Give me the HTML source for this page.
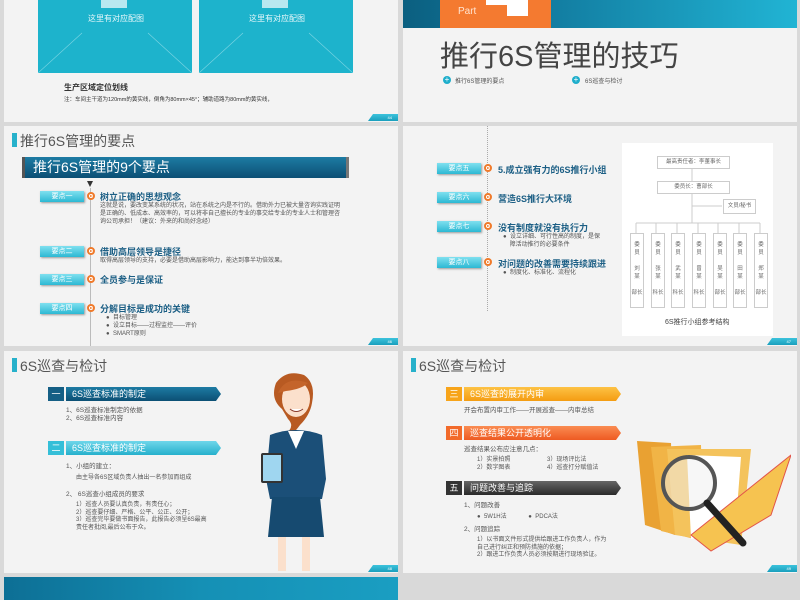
<!DOCTYPE html>
<html><head><meta charset="utf-8"><style>
*{margin:0;padding:0;box-sizing:border-box}
body{width:800px;height:600px;overflow:hidden;background:#d9d9d9;position:relative;font-family:"Liberation Sans","Noto Sans CJK SC",sans-serif;color:#444}
.a{position:absolute;white-space:nowrap}
.s{position:absolute;background:#f3f3f3;overflow:hidden}
.tab{position:absolute;width:30px;height:7px;background:linear-gradient(#3cc3dc,#1a9fbd);clip-path:polygon(5px 0,100% 0,100% 100%,0 100%);color:#fff;font-size:4px;text-align:right;padding-right:6px;line-height:7px}
.ttl{position:absolute;font-size:14px;color:#555}
.ttl:before{content:"";position:absolute;left:-8px;top:2px;width:5px;height:14px;background:#27b1cb}
.lab{position:absolute;width:44px;height:11px;background:linear-gradient(#7fe0ef,#2cb8d3);color:#fff;font-size:7px;line-height:11px;text-align:center;box-shadow:1px 1px 2px #999}
.oc{position:absolute;width:8px;height:8px;border-radius:50%;border:2px solid #f07a2a;background:#fff}
.oc:after{content:"";position:absolute;left:1.3px;top:0.5px;border-left:3px solid #f07a2a;border-top:1.7px solid transparent;border-bottom:1.7px solid transparent}
.h{position:absolute;font-size:9px;font-weight:bold;color:#1c5f85;white-space:nowrap}
.t{position:absolute;font-size:6px;color:#555;line-height:8px}
.bn{position:absolute;height:14px;color:#fff;font-size:9px;line-height:14px;padding-left:6px;clip-path:polygon(0 0,calc(100% - 5px) 0,100% 50%,calc(100% - 5px) 100%,0 100%)}
.nb{position:absolute;width:16px;height:14px;color:#fff;font-size:9px;line-height:14px;text-align:center}
.ob{position:absolute;border:1px solid #ccc;background:#fff;font-size:5.5px;color:#666;text-align:center}
</style></head><body>

<!-- top left slide -->
<div class="s" style="left:4px;top:0;width:394px;height:122px">
 <div class="a" style="left:34px;top:0;width:154px;height:73px;background:#1db3cc"></div>
 <div class="a" style="left:195px;top:0;width:154px;height:73px;background:#1db3cc"></div>
 <div class="a" style="left:97px;top:0;width:26px;height:8px;background:#b8e8f0"></div>
 <div class="a" style="left:258px;top:0;width:26px;height:8px;background:#b8e8f0"></div>
 <div class="a" style="left:84px;top:13px;font-size:8px;color:#e6f7fa">这里有对应配图</div>
 <div class="a" style="left:245px;top:13px;font-size:8px;color:#e6f7fa">这里有对应配图</div>
 <svg class="a" style="left:34px;top:0" width="315" height="73"><g stroke="#7fd6e4" stroke-width=".6"><line x1="0" y1="73" x2="44" y2="33"/><line x1="110" y1="33" x2="154" y2="73"/><line x1="161" y1="73" x2="205" y2="33"/><line x1="271" y1="33" x2="315" y2="73"/></g></svg>
 <div class="a" style="left:60px;top:82px;font-size:8px;font-weight:bold;color:#333">生产区域定位划线</div>
 <div class="a" style="left:60px;top:95px;font-size:5.5px;color:#333">注：车间主干道为120mm的黄实线，倒角为80mm×45°；辅助道路为80mm的黄实线，</div>
 <div class="tab" style="left:364px;top:114px">44</div>
</div>

<!-- top right slide -->
<div class="s" style="left:403px;top:0;width:394px;height:122px">
 <div class="a" style="left:0;top:0;width:394px;height:28px;background:linear-gradient(90deg,#0b5f80,#137fa3 40%,#21b4d4)"></div>
 <div class="a" style="left:37px;top:0;width:111px;height:28px;background:#f47a30"></div>
 <div class="a" style="left:55px;top:6px;font-size:10px;color:#ffe3cf">Part</div>
 <div class="a" style="left:83px;top:0;width:42px;height:5px;background:#fff"></div>
 <div class="a" style="left:104px;top:0;width:21px;height:16px;background:#fff"></div>
 <div class="a" style="left:37px;top:33px;font-size:29px;color:#444">推行6S管理的技巧</div>
 <div class="a" style="left:40px;top:76px;width:8px;height:8px;border-radius:50%;background:#1eaecb;color:#fff;font-size:8px;line-height:8px;text-align:center">+</div>
 <div class="a" style="left:52px;top:76px;font-size:6px;color:#555">推行6S管理的要点</div>
 <div class="a" style="left:169px;top:76px;width:8px;height:8px;border-radius:50%;background:#1eaecb;color:#fff;font-size:8px;line-height:8px;text-align:center">+</div>
 <div class="a" style="left:182px;top:76px;font-size:6px;color:#555">6S巡查与检讨</div>
</div>

<!-- row2 left -->
<div class="s" style="left:4px;top:126px;width:394px;height:220px">
 <div class="ttl" style="left:16px;top:5px">推行6S管理的要点</div>
 <div class="a" style="left:18px;top:31px;width:327px;height:21px;background:linear-gradient(#1d7ba3,#0c4f74);border-left:3px solid #555;border-right:3px solid #777;color:#fff;font-size:14px;line-height:21px;padding-left:8px">推行6S管理的9个要点</div>
 <div class="a" style="left:83px;top:55px;border-top:6px solid #333;border-left:3px solid transparent;border-right:3px solid transparent"></div>
 <div class="a" style="left:86px;top:62px;width:1px;height:158px;background:#bbb"></div>
 <div class="lab" style="left:36px;top:65px">要点一</div><div class="oc" style="left:83px;top:66px"></div>
 <div class="h" style="left:96px;top:64px">树立正确的思想观念</div>
 <div class="t" style="left:96px;top:76px;width:240px;white-space:normal">这就是说，要改变某系统的状况，站在系统之内是不行的。借助外力已被大量咨询实践证明是正确的、低成本、高效率的，可以将非自己擅长的专业的事交给专业的专业人士和管理咨询公司承担！（建议：外来的和尚好念经）</div>
 <div class="lab" style="left:36px;top:120px">要点二</div><div class="oc" style="left:83px;top:121px"></div>
 <div class="h" style="left:96px;top:119px">借助高层领导是捷径</div>
 <div class="t" style="left:96px;top:131px">取得高层领导的支持，必要是借助高层影响力，能达到事半功倍效果。</div>
 <div class="lab" style="left:36px;top:148px">要点三</div><div class="oc" style="left:83px;top:149px"></div>
 <div class="h" style="left:96px;top:147px">全员参与是保证</div>
 <div class="lab" style="left:36px;top:177px">要点四</div><div class="oc" style="left:83px;top:178px"></div>
 <div class="h" style="left:96px;top:176px">分解目标是成功的关键</div>
 <div class="t" style="left:102px;top:188px">●&nbsp; 目标管理<br>●&nbsp; 设立目标——过程监控——评价<br>●&nbsp; SMART原则</div>
 <div class="tab" style="left:364px;top:212px">46</div>
</div>

<!-- row2 right -->
<div class="s" style="left:403px;top:126px;width:394px;height:220px">
 <div class="a" style="left:84px;top:0;width:0;height:185px;border-left:1px dotted #aaa"></div>
 <div class="lab" style="left:34px;top:37px">要点五</div><div class="oc" style="left:81px;top:38px"></div>
 <div class="h" style="left:95px;top:37px">5.成立强有力的6S推行小组</div>
 <div class="lab" style="left:34px;top:66px">要点六</div><div class="oc" style="left:81px;top:67px"></div>
 <div class="h" style="left:95px;top:66px">营造6S推行大环境</div>
 <div class="lab" style="left:34px;top:95px">要点七</div><div class="oc" style="left:81px;top:96px"></div>
 <div class="h" style="left:95px;top:95px">没有制度就没有执行力</div>
 <div class="t" style="left:100px;top:107px">●&nbsp; 设立详细、可行性高的制度，是保<br>&nbsp;&nbsp;&nbsp;&nbsp;障活动推行的必要条件</div>
 <div class="lab" style="left:34px;top:131px">要点八</div><div class="oc" style="left:81px;top:132px"></div>
 <div class="h" style="left:95px;top:131px">对问题的改善需要持续跟进</div>
 <div class="t" style="left:100px;top:143px">●&nbsp; 制度化、标准化、流程化</div>
 <div class="a" style="left:219px;top:17px;width:151px;height:193px;background:#fff"></div>
 <svg class="a" style="left:219px;top:17px" width="151" height="193"><g stroke="#ccc" stroke-width="1" fill="none"><line x1="70" y1="25" x2="70" y2="80"/><line x1="70" y1="63" x2="100" y2="63"/><line x1="14" y1="80" x2="138" y2="80"/><line x1="14" y1="80" x2="14" y2="90"/><line x1="34" y1="80" x2="34" y2="90"/><line x1="55" y1="80" x2="55" y2="90"/><line x1="76" y1="80" x2="76" y2="90"/><line x1="96" y1="80" x2="96" y2="90"/><line x1="117" y1="80" x2="117" y2="90"/><line x1="138" y1="80" x2="138" y2="90"/></g></svg>
 <div class="ob" style="left:254px;top:30px;width:73px;height:13px;line-height:11px">最高责任者：李董事长</div>
 <div class="ob" style="left:254px;top:55px;width:73px;height:13px;line-height:11px">委员长：曹部长</div>
 <div class="ob" style="left:320px;top:73px;width:33px;height:15px;line-height:13px">文员/秘书</div>
 <div class="ob" style="left:227px;top:107px;width:14px;height:75px;line-height:8px;padding-top:7px">委<br>员<br><br>刘<br>某<br><br>部长</div>
 <div class="ob" style="left:248px;top:107px;width:14px;height:75px;line-height:8px;padding-top:7px">委<br>员<br><br>张<br>某<br><br>科长</div>
 <div class="ob" style="left:268px;top:107px;width:14px;height:75px;line-height:8px;padding-top:7px">委<br>员<br><br>武<br>某<br><br>科长</div>
 <div class="ob" style="left:289px;top:107px;width:14px;height:75px;line-height:8px;padding-top:7px">委<br>员<br><br>曾<br>某<br><br>科长</div>
 <div class="ob" style="left:310px;top:107px;width:14px;height:75px;line-height:8px;padding-top:7px">委<br>员<br><br>吴<br>某<br><br>部长</div>
 <div class="ob" style="left:330px;top:107px;width:14px;height:75px;line-height:8px;padding-top:7px">委<br>员<br><br>田<br>某<br><br>部长</div>
 <div class="ob" style="left:351px;top:107px;width:14px;height:75px;line-height:8px;padding-top:7px">委<br>员<br><br>郑<br>某<br><br>部长</div>
 <div class="a" style="left:262px;top:191px;font-size:7px;color:#444">6S推行小组参考结构</div>
 <div class="tab" style="left:364px;top:212px">47</div>
</div>

<!-- row3 left -->
<div class="s" style="left:4px;top:351px;width:394px;height:222px">
 <div class="ttl" style="left:16px;top:5px">6S巡查与检讨</div>
 <div class="nb" style="left:44px;top:36px;background:#155f85">一</div>
 <div class="bn" style="left:62px;top:36px;width:155px;background:linear-gradient(#1d7ba3,#0c4f74)">6S巡查标准的制定</div>
 <div class="t" style="left:62px;top:56px;font-size:6.5px">1、6S巡查标准制定的依据<br>2、6S巡查标准内容</div>
 <div class="nb" style="left:44px;top:90px;background:#35bfd8">二</div>
 <div class="bn" style="left:62px;top:90px;width:155px;background:linear-gradient(#6fd6ea,#26b0cc)">6S巡查标准的制定</div>
 <div class="t" style="left:62px;top:112px;font-size:6.5px">1、小组的建立：</div>
 <div class="t" style="left:72px;top:123px">由主导各6S区域负责人抽出一名参加而组成</div>
 <div class="t" style="left:62px;top:140px;font-size:6.5px">2、 6S巡查小组成员的要求</div>
 <div class="t" style="left:72px;top:151px;line-height:7.5px">1）巡查人员要认真负责，有责任心；<br>2）巡查要仔细、严格、公平、公正、公开；<br>3）巡查完毕要做书面报告，此报告必须呈6S最高<br>责任者批阅,最后公布于众。</div>
 <svg class="a" style="left:252px;top:18px" width="80" height="204">
  <path d="M26 40 Q14 30 20 14 Q30 0 48 6 Q60 14 56 34 Q54 46 44 56 Q34 70 28 66 Q40 58 32 50 Z" fill="#b85a22"/>
  <ellipse cx="40" cy="30" rx="14" ry="18" fill="#fbe0cc"/>
  <path d="M22 24 Q30 6 52 14 Q46 20 30 22 Z" fill="#c4642a"/>
  <path d="M34 40 Q40 45 47 40" stroke="#8a3b2b" fill="#fff" stroke-width="1"/>
  <path d="M14 66 Q40 56 66 66 L70 110 L66 130 L14 130 L10 110 Z" fill="#1b4f78"/>
  <path d="M32 62 L40 80 L48 62 Z" fill="#fff"/>
  <path d="M16 128 L64 128 L68 168 L12 168 Z" fill="#164a70"/>
  <rect x="5" y="84" width="22" height="30" rx="2" fill="#333"/>
  <rect x="7" y="86" width="18" height="26" fill="#9fd6f0"/>
  <rect x="22" y="168" width="8" height="34" fill="#fbe0cc"/>
  <rect x="46" y="168" width="8" height="34" fill="#fbe0cc"/>
 </svg>
 <div class="tab" style="left:364px;top:214px">48</div>
</div>

<!-- row3 right -->
<div class="s" style="left:403px;top:351px;width:394px;height:222px">
 <div class="ttl" style="left:16px;top:5px">6S巡查与检讨</div>
 <div class="nb" style="left:43px;top:36px;background:#f7a41a">三</div>
 <div class="bn" style="left:61px;top:36px;width:157px;background:linear-gradient(#fdc245,#f49c12)">6S巡查的展开内审</div>
 <div class="t" style="left:61px;top:56px;font-size:6.5px">开会布置内审工作——开展巡查——内审总结</div>
 <div class="nb" style="left:43px;top:75px;background:#f26a2a">四</div>
 <div class="bn" style="left:61px;top:75px;width:157px;background:linear-gradient(#fa8c52,#ee5a22)">巡查结果公开透明化</div>
 <div class="t" style="left:61px;top:95px;font-size:6.5px">巡查结果公布应注意几点：</div>
 <div class="t" style="left:74px;top:106px;line-height:7.5px">1）实景拍照<br>2）数字图表</div>
 <div class="t" style="left:144px;top:106px;line-height:7.5px">3）现场评比法<br>4）巡查打分赋值法</div>
 <div class="nb" style="left:43px;top:130px;background:#333">五</div>
 <div class="bn" style="left:61px;top:130px;width:157px;background:linear-gradient(#666,#2a2a2a)">问题改善与追踪</div>
 <div class="t" style="left:61px;top:151px;font-size:6.5px">1、问题改善</div>
 <div class="t" style="left:74px;top:162px">●&nbsp; 5W1H法&nbsp;&nbsp;&nbsp;&nbsp;&nbsp;&nbsp;&nbsp;&nbsp;&nbsp;&nbsp;&nbsp;&nbsp;&nbsp;●&nbsp; PDCA法</div>
 <div class="t" style="left:61px;top:175px;font-size:6.5px">2、问题追踪</div>
 <div class="t" style="left:74px;top:186px;line-height:7.5px">1）以书面文件形式提供给跟进工作负责人，作为<br>自己进行纠正和预防措施的依据；<br>2）跟进工作负责人员必须按期进行现场验证。</div>
 <svg class="a" style="left:228px;top:84px" width="160" height="120">
  <path d="M6 6 L40 8 L44 100 L14 90 Z" fill="#e9a132"/>
  <path d="M20 12 L70 10 L72 106 L30 96 Z" fill="#f1b446"/>
  <path d="M36 14 L120 14 L110 110 L44 100 Z" fill="#f4c35c"/>
  <path d="M56 20 L110 22 L104 100 L60 104 Z" fill="#fff"/>
  <path d="M60 100 L160 20 L140 80 L80 116 Z" fill="#f6c350" stroke="#e2544a" stroke-width="1"/>
  <circle cx="58" cy="48" r="26" fill="rgba(240,240,240,.5)" stroke="#555" stroke-width="4"/>
  <path d="M76 68 L112 108" stroke="#222" stroke-width="7" stroke-linecap="round"/>
 </svg>
 <div class="tab" style="left:364px;top:214px">49</div>
</div>

<!-- row4 left -->
<div class="a" style="left:4px;top:577px;width:394px;height:23px;background:linear-gradient(90deg,#0d6f95,#1590b5 50%,#1a9ec2)"></div>
</body></html>
